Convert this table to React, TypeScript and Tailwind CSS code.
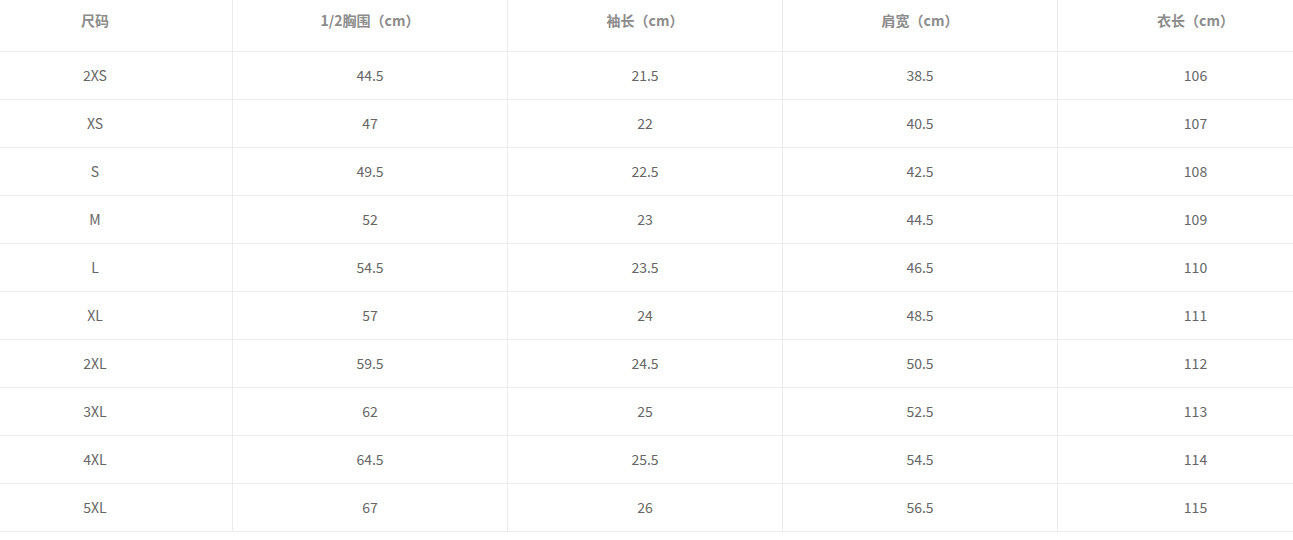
const headers = ["尺码", "1/2胸围（cm）", "袖长（cm）", "肩宽（cm）", "衣长（cm）"];

const rows = [
    ["2XS", "44.5", "21.5", "38.5", "106"],
    ["XS", "47", "22", "40.5", "107"],
    ["S", "49.5", "22.5", "42.5", "108"],
    ["M", "52", "23", "44.5", "109"],
    ["L", "54.5", "23.5", "46.5", "110"],
    ["XL", "57", "24", "48.5", "111"],
    ["2XL", "59.5", "24.5", "50.5", "112"],
    ["3XL", "62", "25", "52.5", "113"],
    ["4XL", "64.5", "25.5", "54.5", "114"],
    ["5XL", "67", "26", "56.5", "115"],
];

// table is wider than the view and cut on both sides
const cols = "grid grid-cols-5";

export default function App() {
    return (
        <div className="w-[1293px] h-[540px] overflow-hidden bg-white font-['Noto_Sans_CJK_SC',sans-serif]">
            <div className="w-[1375px] -ml-[42px]">
                <div className={`${cols} border-b border-[#ececec]`}>
                    {headers.map((h, i) => (
                        <div
                            key={h}
                            className={`h-[51px] pt-[10px] text-center text-[14px] leading-5 font-bold text-[#8c8c8c] ${i < 4 ? "border-r border-[#ececec]" : ""}`}
                        >
                            {h}
                        </div>
                    ))}
                </div>
                {rows.map((row) => (
                    <div key={row[0]} className={`${cols} border-b border-[#ececec]`}>
                        {row.map((cell, i) => (
                            <div
                                key={i}
                                className={`h-[47px] flex items-center justify-center text-[14px] text-[#666] ${i < 4 ? "border-r border-[#ececec]" : ""}`}
                            >
                                {cell}
                            </div>
                        ))}
                    </div>
                ))}
            </div>
        </div>
    );
}
